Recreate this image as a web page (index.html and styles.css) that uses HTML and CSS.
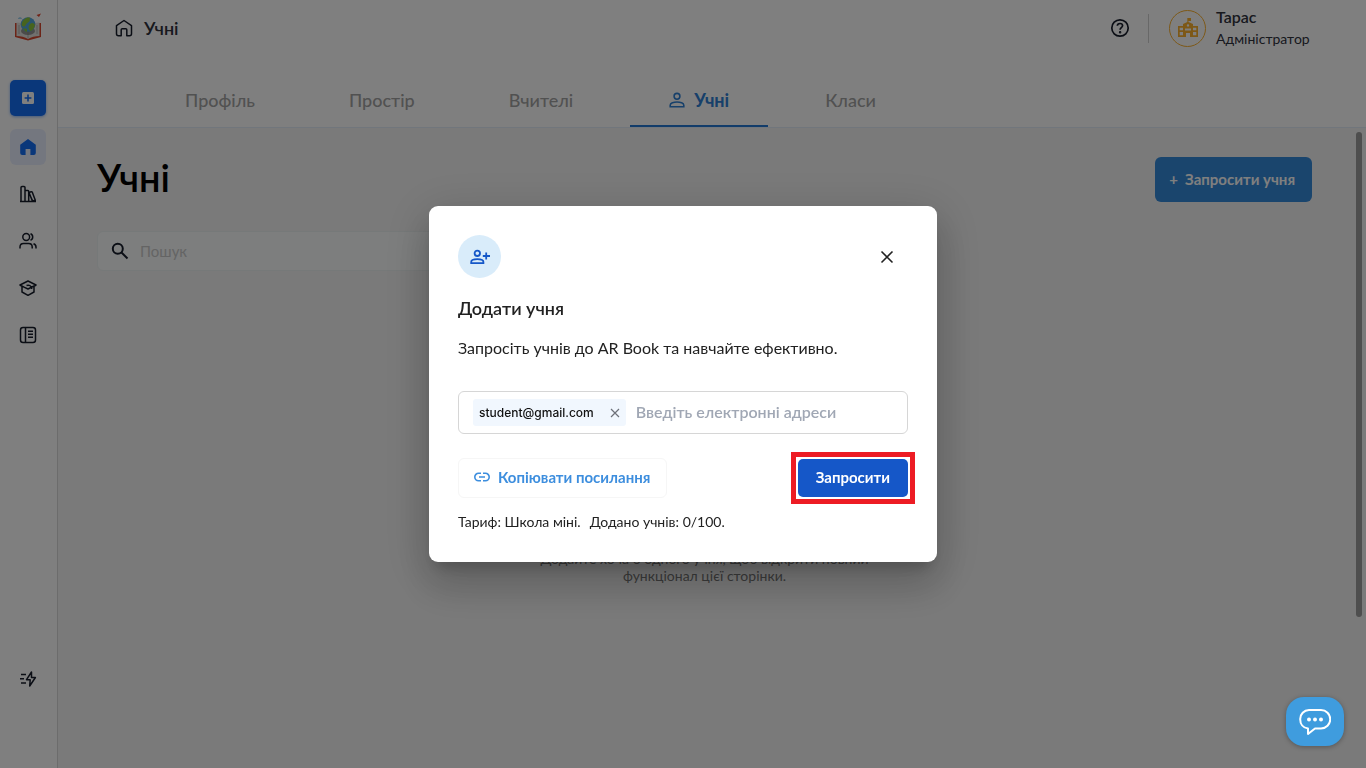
FILE: index.html
```html
<!DOCTYPE html>
<html lang="uk">
<head>
<meta charset="utf-8">
<title>Учні – AR Book</title>
<link rel="stylesheet" href="styles.css">
</head>
<body>
<div class="app">
  <aside class="sidebar">
    <a class="logo" href="#" aria-label="AR Book">
      <svg width="28" height="28" viewBox="0 0 28 28">
        <path d="M1 10v14l13 3.500L27 24V10" fill="#d8482f"/>
        <path d="M2.500 9.500c4 0 8.500 1 11.500 3 3-2 7.500-3 11.500-3v13.500c-4 0-8.500 1-11.500 3-3-2-7.500-3-11.500-3z" fill="#e2e0dd"/>
        <path d="M14 13v12M5 12v9M23 12v9" stroke="#b3b0ac" fill="none"/>
        <ellipse cx="14" cy="18" rx="7" ry="4" fill="#777" opacity=".7"/>
        <circle cx="14" cy="11.500" r="7.300" fill="#55a9dc"/>
        <path d="M8 10c1-4 5-6 8-5.500-1 3 1 3-2 5s-2 4-4 4-3-1.500-2-3.500zM16 11c2-2 4-1 5 1-1 4-3 6-5 6-2-3-2-5 0-7zM9 15l4 1v3q-3-1-4-4z" fill="#8fc93a"/>
        <path d="M22.500 2 27 .5 25 4z" fill="#e2452c"/>
        <path d="M4 5.500c1-2 4-1.500 4 .5H4z" fill="#9fd0ec"/>
      </svg>
    </a>
    <nav class="side-nav">
      <button class="side-add" aria-label="Додати">
        <svg width="14" height="14" viewBox="0 0 14 14"><rect x="1" y="1" width="12" height="12" rx="1.500" fill="#fff"/><path d="M7 3.600v6.800M3.600 7h6.800" stroke="#146ef5" stroke-width="1.600"/></svg>
      </button>
      <a class="side-link side-link-active" href="#" aria-label="Головна">
        <svg width="18" height="18" viewBox="0 0 18 18"><path d="M1.200 6.800 9 1l7.800 5.800V15a2 2 0 0 1-2 2H11.400v-6H6.600v6H3.200a2 2 0 0 1-2-2z" fill="#146ef5"/></svg>
      </a>
      <a class="side-link" href="#" aria-label="Бібліотека">
        <svg class="line" width="18" height="18" viewBox="0 0 18 18"><path d="M1 16.500h16M2 16V2.500Q2 1.500 3 1.500h2Q6 1.500 6 2.500V16M6 5.500h3Q9.700 5.500 9.700 6.500V16M9.700 7.500l2.500-.8q.8-.2 1.100.6l3 7.900-2.600.8zM10 7.500l3.400 8.500"/></svg>
      </a>
      <a class="side-link" href="#" aria-label="Користувачі">
        <svg class="line" width="18" height="18" viewBox="0 0 18 18"><circle cx="7.200" cy="5" r="3.400"/><path d="M1 16.500v-1.500q0-3.500 3.500-3.500h5.200q3.500 0 3.500 3.500v1.500M11.500 1.800q2.200.7 2.200 3.200t-2.200 3.200M14.500 11.700q2.500.8 2.500 3.300v1.500"/></svg>
      </a>
      <a class="side-link" href="#" aria-label="Навчання">
        <svg class="line" width="18" height="18" viewBox="0 0 18 18"><path d="M3 7.300 1 6l8-4 8 4-2 1.300M3 7v6l6 3.300 6-3.300V7M1 6l4.500 2.300L9 10l3-1.500M7.500 6.500c3-1 5 .5 5.300 3.500M17 6l-5 2.500"/></svg>
      </a>
      <a class="side-link" href="#" aria-label="Журнал">
        <svg class="line" width="18" height="18" viewBox="0 0 18 18"><rect x="1.500" y="1.500" width="15" height="15" rx="2.500"/><path d="M6.500 1.500v15M9 5.300h5M9 8.300h5M9 11.300h5"/></svg>
      </a>
    </nav>
    <a class="side-link" href="#" aria-label="Швидкі дії">
      <svg class="line" width="18" height="18" viewBox="0 0 18 18"><path d="M2 4.500h5M1 8.700h4M2 13h5M12.500 2 7.500 9.700h3.700l-.5 6.300 5.700-8.500h-3.900z"/></svg>
    </a>
  </aside>

  <main class="main">
    <header class="topbar">
      <div class="crumb">
        <svg class="line" width="18" height="18" viewBox="0 0 18 18"><path d="M1.500 6.700 9 1.500l7.500 5.200v8q0 2-2 2h-2.700v-6q0-1-1-1H7.200q-1 0-1 1v6H3.500q-2 0-2-2z"/></svg>
        <span>Учні</span>
      </div>
      <div class="account">
        <button class="plain help" aria-label="Довідка">
          <svg class="line" width="20" height="20" viewBox="0 0 20 20"><circle cx="10" cy="10" r="8.200" stroke-width="1.700"/><path d="M7.300 7.800q.2-2.300 2.700-2.300t2.600 2.100c0 2-2.500 2-2.500 4.100" stroke-width="1.700"/><circle cx="10.100" cy="14.200" r=".5"/></svg>
        </button>
        <span class="divider"></span>
        <span class="avatar">
          <svg width="20" height="20" viewBox="0 0 20 20" fill="#fbb12f"><path fill-rule="evenodd" d="M0 8h5V6l4.300-2V0H13v3h-2.500v1L15 6v2h5v11h-8v-4H8v4H0zM1.700 9.700v2.600H5V9.700zM1.700 14v3.300H5V14zM15 9.700v2.600h3.300V9.700zM15 14v3.300h3.300V14zM7 10.500v2h6v-2zM10 6.200a1.200 1.200 0 1 0 0 2.400 1.200 1.200 0 0 0 0-2.400z"/></svg>
        </span>
        <div class="who"><strong>Тарас</strong><span>Адміністратор</span></div>
      </div>
    </header>

    <nav class="tabs">
      <a class="tab" href="#">Профіль</a>
      <a class="tab" href="#">Простір</a>
      <a class="tab" href="#">Вчителі</a>
      <a class="tab tab-active" href="#">
        <svg width="16" height="16" viewBox="0 0 16 16" fill="none" stroke="currentColor" stroke-width="1.600"><circle cx="8" cy="4.300" r="2.900"/><path d="M1.200 14.700v-1.500c0-2 3.600-3.200 6.800-3.200s6.800 1.200 6.800 3.200v1.500z"/></svg>
        Учні
      </a>
      <a class="tab" href="#">Класи</a>
    </nav>

    <section class="content">
      <div class="content-head">
        <h1>Учні</h1>
        <button class="invite"><span>+</span>Запросити учня</button>
      </div>
      <label class="search">
        <svg width="18" height="18" viewBox="0 0 18 18" fill="none" stroke="#171d2b" stroke-width="2"><circle cx="6.800" cy="6.800" r="5"/><path d="m10.500 10.500 6 6"/></svg>
        <input type="search" placeholder="Пошук" aria-label="Пошук">
      </label>
      <p class="empty">Додайте хоча б одного учня, щоб відкрити повний<br>функціонал цієї сторінки.</p>
      <span class="scroll-thumb"></span>
    </section>
  </main>
</div>

<div class="backdrop">
  <div class="dialog" role="dialog" aria-modal="true" aria-labelledby="dialog-title">
    <div class="dialog-top">
      <span class="badge">
        <svg width="20" height="16" viewBox="0 0 20 16" fill="none" stroke="#1557c8" stroke-width="1.800"><circle cx="7.300" cy="4.300" r="2.700"/><path d="M1.200 14.200v-1.300c0-1.700 3.200-2.700 6.100-2.700s6.100 1 6.100 2.700v1.300zM16.200 3.500v7M12.800 7H20"/></svg>
      </span>
      <button class="plain close" aria-label="Закрити">
        <svg width="14" height="14" viewBox="0 0 14 14" stroke="#222" stroke-width="1.600"><path d="m1.500 1.500 11 11M12.500 1.500l-11 11"/></svg>
      </button>
    </div>
    <h2 id="dialog-title">Додати учня</h2>
    <p class="lead">Запросіть учнів до AR Book та навчайте ефективно.</p>
    <div class="emails">
      <span class="chip">student@gmail.com
        <button class="plain" aria-label="Видалити"><svg width="10" height="10" viewBox="0 0 10 10" stroke="#6d7179" stroke-width="1.200"><path d="m1 1 8 8M9 1 1 9"/></svg></button>
      </span>
      <input type="text" placeholder="Введіть електронні адреси" aria-label="Електронні адреси">
    </div>
    <div class="actions">
      <button class="copy">
        <svg width="16" height="10" viewBox="0 0 16 10" fill="none" stroke="currentColor" stroke-width="1.600"><path d="M7 1.300H4.500a3.700 3.700 0 0 0 0 7.400H7M9 1.300h2.500a3.700 3.700 0 0 1 0 7.400H9M5 5h6"/></svg>
        Копіювати посилання
      </button>
      <div class="frame"><button class="send">Запросити</button></div>
    </div>
    <p class="plan"><span>Тариф: Школа міні.</span><span>Додано учнів: 0/100.</span></p>
  </div>
</div>

<button class="chat" aria-label="Чат">
  <svg width="32" height="28" viewBox="0 0 32 28" fill="none" stroke="#fff" stroke-width="2"><path d="M10 2h12a9 9 0 0 1 0 18.500h-6L9 26v-5.500C4 20 1.200 16 1.200 11.200A9 9 0 0 1 10 2z" stroke-linejoin="round"/><g fill="#fff" stroke="none"><circle cx="10" cy="11.500" r="2"/><circle cx="16" cy="11.500" r="2"/><circle cx="22" cy="11.500" r="2"/></g></svg>
</button>
</body>
</html>
```

FILE: styles.css
```css
* { box-sizing: border-box; }
body { margin: 0; font-family: Lato, "Noto Sans", sans-serif; font-size: 16px; color: #222; background: #fff; }
h1, h2, p { margin: 0; }
a { color: inherit; text-decoration: none; }
button, input { font: inherit; color: inherit; }
button { border: 0; padding: 0; display: inline-flex; align-items: center; justify-content: center; }
svg { display: block; flex: none; }
.plain { background: none; }
.line { fill: none; stroke: #171d2b; stroke-width: 1.5; stroke-linejoin: round; }

.app { display: flex; height: 100vh; }
.sidebar { width: 58px; flex: none; display: flex; flex-direction: column; align-items: center; padding: 13px 1px 71px 0; border-right: 1px solid #d9d9d9; }
.logo { margin-bottom: 39px; }
.side-nav { flex: 1; display: flex; flex-direction: column; align-items: center; gap: 11px; }
.side-add { width: 36px; height: 36px; margin-bottom: 2px; background: #146ef5; border-radius: 5px; box-shadow: 0 1px 3px #146ef580; }
.side-link { width: 36px; height: 36px; display: flex; align-items: center; justify-content: center; border-radius: 6px; }
.side-link-active { background: #e9efff; }

.main { flex: 1; min-width: 0; display: flex; flex-direction: column; }
.topbar { height: 56px; display: flex; align-items: center; justify-content: space-between; padding: 0 54px 0 57px; }
.crumb { display: flex; align-items: center; gap: 11px; font-size: 18px; font-weight: 600; color: #30323d; }
.account { display: flex; align-items: center; }
.divider { width: 1px; height: 29px; margin: 0 20px 0 18px; background: #d0d0d0; }
.avatar { width: 37px; height: 37px; display: flex; align-items: center; justify-content: center; border: 1px solid #fbb12f; border-radius: 50%; }
.who { display: flex; flex-direction: column; min-width: 96px; margin-left: 10px; font-size: 14px; line-height: 22px; color: #30323d; }
.who strong { font-size: 16px; font-weight: 600; }

.tabs { display: flex; gap: 20px; height: 72px; padding: 19px 90px 0; border-bottom: 1px solid #e2edf8; }
.tab { display: flex; align-items: center; gap: 9px; padding: 0 37px; font-size: 18px; font-weight: 500; color: #a3a3a3; border-bottom: 2px solid transparent; }
.tab-active { padding: 0 39px; font-weight: 700; color: #2f80d5; border-color: #2478d4; }

.content { position: relative; flex: 1; padding: 29px 54px 0 39px; background: #f5f5f5; }
.content-head { display: flex; justify-content: space-between; align-items: flex-start; }
h1 { font-size: 38px; line-height: 40px; font-weight: 600; color: #000; }
.invite { height: 45px; padding: 0 17px 2px 14px; gap: 7px; border-radius: 6px; background: #358ada; color: #fff; font-size: 15px; font-weight: 700; }
.search { display: flex; align-items: center; gap: 11px; width: 400px; height: 40px; margin-top: 29px; padding: 0 13px; border: 1px solid #edf2f2; border-radius: 6px; background: #fafdfd; }
.search input { flex: 1; min-width: 0; border: 0; padding: 0; background: none; font-size: 15px; }
.search input::placeholder { color: #c9c9c9; opacity: 1; }
.empty { margin-top: 279px; text-align: center; font-size: 14px; line-height: 17px; color: #777; }
.scroll-thumb { position: absolute; top: 4px; right: 4px; width: 6px; height: 485px; border-radius: 3px; background: #9c9c9c; }

.backdrop { position: fixed; inset: 0; display: flex; align-items: center; justify-content: center; background: rgba(0, 0, 0, .5); }
.dialog { width: 508px; max-width: 100%; padding: 29px 29px 30px; border-radius: 9px; background: #fff; box-shadow: 0 11px 15px -7px rgba(0, 0, 0, .2), 0 24px 38px 3px rgba(0, 0, 0, .14), 0 9px 46px 8px rgba(0, 0, 0, .12); }
.dialog-top { display: flex; align-items: center; justify-content: space-between; padding-right: 14px; }
.badge { width: 43px; height: 43px; display: flex; align-items: center; justify-content: center; border-radius: 50%; background: #d9ecfa; }
h2 { margin-top: 18px; font-size: 18px; line-height: 24px; font-weight: 600; }
.lead { margin-top: 16px; line-height: 24px; }
.emails { display: flex; align-items: center; gap: 10px; height: 43px; margin-top: 31px; padding: 0 14px; border: 1px solid #d6d6d6; border-radius: 6px; }
.chip { display: flex; align-items: center; gap: 16px; height: 27px; padding: 0 6px; border-radius: 3px; background: #f1f7fe; font-family: Inter, sans-serif; font-size: 12px; font-weight: 500; color: #111; }
.emails input { flex: 1; min-width: 0; border: 0; padding: 0 0 2px; background: none; font-weight: 600; }
.emails input::placeholder { color: #a0a7b4; opacity: 1; }
.actions { display: flex; align-items: center; justify-content: space-between; height: 40px; margin-top: 24px; font-size: 15px; font-weight: 700; }
.copy { height: 40px; padding: 0 16px 2px 15px; gap: 8px; border: 1px solid #f6f6f6; border-radius: 6px; background: #fff; color: #3d8ede; }
.frame { margin: -7px; padding: 2px; border: 5px solid #ed1c24; }
.send { height: 38px; padding: 0 18px 2px; border-radius: 5px; background: #1557c8; color: #fff; }
.plan { display: flex; gap: 9px; margin-top: 14px; font-size: 14px; line-height: 20px; }

.chat { position: fixed; right: 22px; bottom: 22px; width: 58px; height: 49px; border-radius: 18px; background: #3f9cde; box-shadow: 0 1px 5px rgba(0, 0, 0, .3); }
```
